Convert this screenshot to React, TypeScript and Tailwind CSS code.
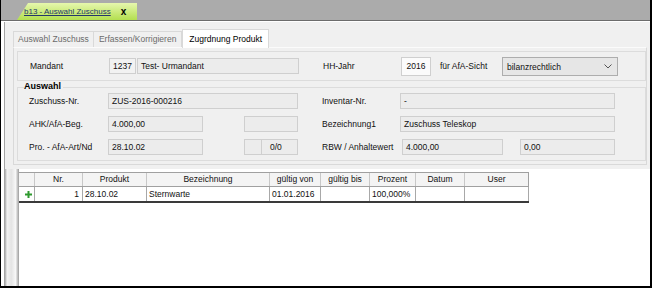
import type { ReactNode } from 'react'

const FONT = "font-['Liberation_Sans',Arial,sans-serif]"

function Box({ w, children, className = '' }: { w: string; children?: ReactNode; className?: string }) {
  return (
    <div className={`${w} h-[16px] shrink-0 border border-[#cfcfcf] bg-[#ececec] px-[3px] leading-[14px] whitespace-nowrap ${className}`}>
      {children}
    </div>
  )
}

function Label({ w, children }: { w: string; children: ReactNode }) {
  return <div className={`${w} shrink-0 whitespace-nowrap`}>{children}</div>
}

const cols = [
  { w: 'w-[16px]', title: '' },
  { w: 'w-[48px]', title: 'Nr.' },
  { w: 'w-[64px]', title: 'Produkt' },
  { w: 'w-[123px]', title: 'Bezeichnung' },
  { w: 'w-[51px]', title: 'gültig von' },
  { w: 'w-[49px]', title: 'gültig bis' },
  { w: 'w-[46px]', title: 'Prozent' },
  { w: 'w-[49px]', title: 'Datum' },
  { w: 'w-[64px]', title: 'User' },
]

const row = ['', '1', '28.10.02', 'Sternwarte', '01.01.2016', '', '100,000%', '', '']

export default function App() {
  return (
    <div className={`flex h-[288px] w-[652px] flex-col overflow-hidden border-b-2 border-l border-r-2 border-black bg-white text-[8.5px] text-[#111] ${FONT}`}>
      {/* Fenster-Tab */}
      <div className="h-[20px] shrink-0 bg-[#ababab] pl-[16px] pt-[3px]">
        <div className="flex h-[17px] w-[120px] items-center bg-[linear-gradient(#e6f7ae,#b3df4f)] pl-[7px] [clip-path:polygon(11px_0,100%_0,100%_100%,0_100%)]">
          <span className="text-[8px] text-[#24366a] underline">b13 - Auswahl Zuschuss</span>
          <span className="ml-[10px] text-[10px] font-bold leading-none text-black">x</span>
        </div>
      </div>
      <div className="h-px shrink-0 bg-[#6c6c6c]" />
      <div className="h-px shrink-0 bg-white" />

      <div className="flex min-h-0 flex-1">
        <div className="w-[3px] shrink-0 bg-white" />
        <div className="w-px shrink-0 bg-[#a4a4a4]" />
        <div className="flex min-w-0 flex-1 flex-col bg-[#f0f0f0]">
          {/* Register */}
          <div className="flex h-[25px] shrink-0 items-end pl-[8px]">
            <div className="flex h-[16px] items-center border border-b-0 border-[#d9d9d9] px-[4px] text-[#6b6b6b]">Auswahl Zuschuss</div>
            <div className="flex h-[16px] items-center border border-b-0 border-l-0 border-[#d9d9d9] px-[5px] text-[#6b6b6b]">Erfassen/Korrigieren</div>
            <div className="relative top-px flex h-[19px] items-center border border-b-0 border-[#d9d9d9] bg-white px-[6px] text-black">Zugrdnung Produkt</div>
          </div>

          <div className="mx-[8px] mr-[3px] flex shrink-0 flex-col gap-[6px] border border-[#d9d9d9] border-t-[#fbfbfb] bg-[#f0f0f0] pb-[3px] pl-[3px] pt-[3px]">
            {/* Mandant */}
            <div className="flex h-[30px] items-center border border-[#dcdcdc] pl-[12px]">
              <Label w="w-[79px]">Mandant</Label>
              <Box w="w-[27px]" className="bg-[#f2f2f2] text-right">1237</Box>
              <Box w="w-[162px]" className="ml-px">Test- Urmandant</Box>
              <Label w="ml-[24px] w-[78px]">HH-Jahr</Label>
              <Box w="w-[30px]" className="h-[19px] bg-[#fbfbfb] text-center leading-[17px]">2016</Box>
              <Label w="ml-[9px] w-[62px]">für AfA-Sicht</Label>
              <div className="flex h-[19px] w-[116px] items-center justify-between border border-[#adadad] bg-[#e6e6e6] pl-[4px] pr-[5px]">
                <span className="mt-[2px]">bilanzrechtlich</span>
                <svg width="8" height="5" viewBox="0 0 8 5">
                  <polyline points="0.5,0.5 4,4 7.5,0.5" fill="none" stroke="#555" strokeWidth="1" />
                </svg>
              </div>
            </div>

            {/* Auswahl */}
            <div className="relative flex flex-col gap-[7px] border border-[#dcdcdc] pb-[5px] pl-[11px] pt-[5px]">
              <span className="absolute -top-[7px] left-[6px] bg-[#f0f0f0] pr-[2px] text-[9px] font-bold leading-[10px] text-black">Auswahl</span>
              <div className="flex items-center">
                <Label w="w-[79px]">Zuschuss-Nr.</Label>
                <Box w="w-[190px]">ZUS-2016-000216</Box>
                <Label w="ml-[24px] w-[78px]">Inventar-Nr.</Label>
                <Box w="w-[215px]">-</Box>
              </div>
              <div className="flex items-center">
                <Label w="w-[79px]">AHK/AfA-Beg.</Label>
                <Box w="w-[95px]">4.000,00</Box>
                <Box w="ml-[41px] w-[54px]" />
                <Label w="ml-[24px] w-[78px]">Bezeichnung1</Label>
                <Box w="w-[215px]">Zuschuss Teleskop</Box>
              </div>
              <div className="flex items-center">
                <Label w="w-[79px]">Pro. - AfA-Art/Nd</Label>
                <Box w="w-[95px]">28.10.02</Box>
                <Box w="ml-[41px] w-[18px]" />
                <Box w="w-[36px]" className="border-l-0 pl-[8px]">0/0</Box>
                <Label w="ml-[24px] w-[80px]">RBW / Anhaltewert</Label>
                <Box w="w-[101px]">4.000,00</Box>
                <Box w="ml-[17px] w-[95px]">0,00</Box>
              </div>
            </div>
          </div>

          {/* Tabelle */}
          <div className="mt-[4px] flex min-h-0 flex-1">
            <div className="w-[14px] shrink-0 bg-[linear-gradient(to_right,#a9a9a9,#f2f2f2_15%,#e4e4e4_45%,#f7f7f7_75%,#9c9c9c)]" />
            <div className="flex-1 bg-white pt-[3px]">
              <div className="w-[510px]">
                <div className="flex h-[15px] border-y border-[#a0a0a0] bg-[#f4f4f4]">
                  {cols.map((c, i) => (
                    <div
                      key={i}
                      className={`${c.w} shrink-0 border-r border-[#c8c8c8] text-center leading-[13px] ${i === cols.length - 1 ? 'border-r-[#a0a0a0]' : ''}`}
                    >
                      {c.title}
                    </div>
                  ))}
                </div>
                <div className="flex h-[16px] border-b-2 border-[#3a3a3a]">
                  {cols.map((c, i) => (
                    <div
                      key={i}
                      className={`${c.w} flex shrink-0 items-center border-r border-[#a8a8a8] ${i === 1 ? 'justify-end pr-[3px]' : 'pl-[2px]'}`}
                    >
                      {i === 0 ? (
                        <svg width="7" height="7" viewBox="0 0 7 7" className="ml-[4px]">
                          <path d="M2.5 0h2v2.5H7v2H4.5V7h-2V4.5H0v-2h2.5z" fill="#2f9a2f" />
                        </svg>
                      ) : (
                        row[i]
                      )}
                    </div>
                  ))}
                </div>
              </div>
            </div>
          </div>
        </div>
      </div>
    </div>
  )
}
